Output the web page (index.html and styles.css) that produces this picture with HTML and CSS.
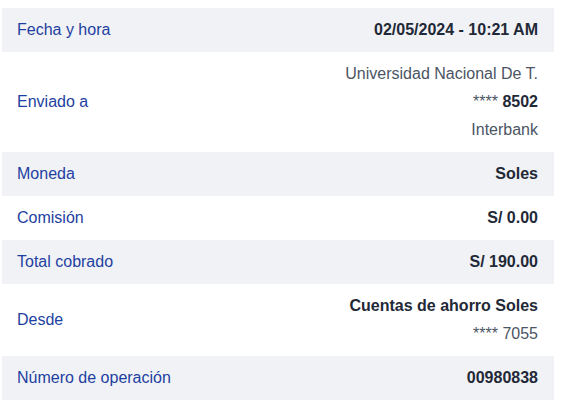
FILE: index.html
```html
<!DOCTYPE html>
<html lang="es">
<head>
<meta charset="utf-8">
<link rel="stylesheet" href="styles.css">
</head>
<body>
<div class="details">
  <div class="row alt">
    <div class="label">Fecha y hora</div>
    <div class="value"><span class="strong">02/05/2024 - 10:21 AM</span></div>
  </div>
  <div class="row">
    <div class="label">Enviado a</div>
    <div class="value">
      <span class="muted">Universidad Nacional De T.</span>
      <span><span class="muted">****</span> <span class="strong">8502</span></span>
      <span class="muted">Interbank</span>
    </div>
  </div>
  <div class="row alt">
    <div class="label">Moneda</div>
    <div class="value"><span class="strong">Soles</span></div>
  </div>
  <div class="row">
    <div class="label">Comisión</div>
    <div class="value"><span class="strong">S/ 0.00</span></div>
  </div>
  <div class="row alt">
    <div class="label">Total cobrado</div>
    <div class="value"><span class="strong">S/ 190.00</span></div>
  </div>
  <div class="row">
    <div class="label">Desde</div>
    <div class="value">
      <span class="strong">Cuentas de ahorro Soles</span>
      <span class="muted">**** 7055</span>
    </div>
  </div>
  <div class="row alt">
    <div class="label">Número de operación</div>
    <div class="value"><span class="strong">00980838</span></div>
  </div>
</div>
</body>
</html>
```
FILE: styles.css
```css
* { box-sizing: border-box; }
html, body { margin: 0; padding: 0; background: #ffffff; }
body {
  font-family: "Liberation Sans", Arial, sans-serif;
  font-size: 16px;
  padding: 8px 7px 0 2px;
}
.details {
  display: flex;
  flex-direction: column;
}
.row {
  display: flex;
  justify-content: space-between;
  align-items: center;
  padding: 8px 16px 8px 15px;
  line-height: 28px;
  background: #ffffff;
}
.row.alt { background: #f1f2f6; }
.label { color: #1e3fa0; }
.value {
  display: flex;
  flex-direction: column;
  align-items: flex-end;
  text-align: right;
}
.strong { font-weight: 700; color: #1f2937; }
.muted { color: #4b5563; }
```
